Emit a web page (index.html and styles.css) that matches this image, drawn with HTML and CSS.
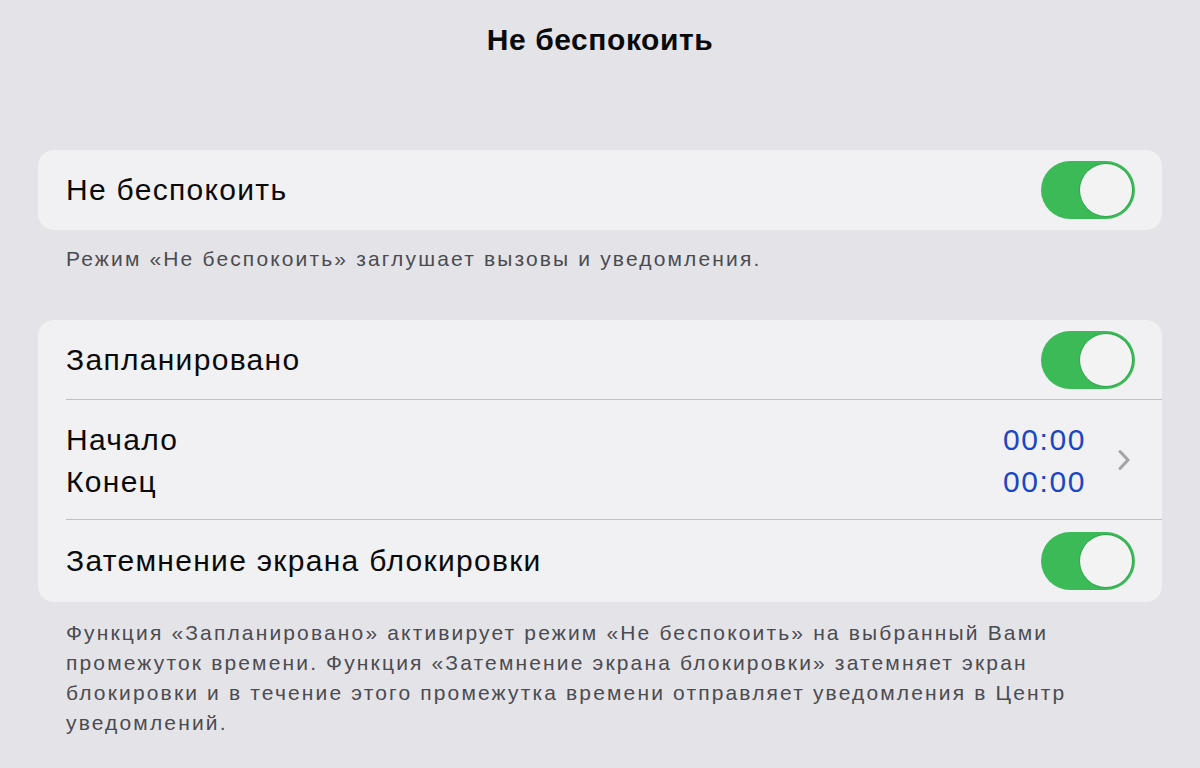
FILE: index.html
```html
<!DOCTYPE html>
<html lang="ru">
<head>
<meta charset="utf-8">
<link rel="stylesheet" href="styles.css">
</head>
<body>
<div class="page">
  <header class="nav"><h1 class="title">Не беспокоить</h1></header>

  <section class="group first">
    <div class="card">
      <div class="row">
        <span class="label">Не беспокоить</span>
        <span class="switch on"><span class="knob"></span></span>
      </div>
    </div>
    <p class="note">Режим «Не беспокоить» заглушает вызовы и уведомления.</p>
  </section>

  <section class="group second">
    <div class="card">
      <div class="row">
        <span class="label">Запланировано</span>
        <span class="switch on"><span class="knob"></span></span>
      </div>
      <div class="row tall">
        <div class="pair">
          <span class="label">Начало</span>
          <span class="label">Конец</span>
        </div>
        <div class="times">
          <span class="time">00:00</span>
          <span class="time">00:00</span>
        </div>
        <svg class="chev" width="14" height="22" viewBox="0 0 14 22"><path d="M3 2.5 L11 11 L3 19.5" fill="none" stroke="#a3a3a8" stroke-width="3" stroke-linecap="round" stroke-linejoin="round"/></svg>
      </div>
      <div class="row last">
        <span class="label">Затемнение экрана блокировки</span>
        <span class="switch on"><span class="knob"></span></span>
      </div>
    </div>
    <p class="note">Функция «Запланировано» активирует режим «Не беспокоить» на выбранный Вами промежуток времени. Функция «Затемнение экрана блокировки» затемняет экран блокировки и в течение этого промежутка времени отправляет уведомления в Центр уведомлений.</p>
  </section>
</div>
</body>
</html>
```

FILE: styles.css
```css
* { box-sizing: border-box; }
html, body {
  margin: 0;
  padding: 0;
  background: #e4e3e8;
  width: 1200px;
  height: 768px;
  overflow: hidden;
}
body {
  font-family: "Liberation Sans", Arial, sans-serif;
  color: #0a0a0a;
}
.page {
  display: flex;
  flex-direction: column;
  padding: 0 38px;
}
.nav {
  height: 80px;
  display: flex;
  align-items: center;
  justify-content: center;
}
.title {
  margin: 0;
  font-size: 30px;
  font-weight: 700;
  letter-spacing: 0.55px;
}
.group.first { margin-top: 70px; }
.group.second { margin-top: 46px; }
.card {
  background: #f1f1f3;
  border-radius: 16px;
  overflow: hidden;
}
.row {
  display: flex;
  align-items: center;
  height: 80px;
  padding: 0 27px 0 28px;
  position: relative;
}
.row + .row::before {
  content: "";
  position: absolute;
  left: 28px;
  right: 0;
  top: -1px;
  height: 1px;
  background: #c0c0c4;
}
.row.tall { height: 120px; }
.row.last { height: 82px; }
.label {
  font-size: 30px;
  line-height: 42px;
  letter-spacing: 1.3px;
  flex: 1;
}
.pair {
  display: flex;
  flex-direction: column;
  flex: 1;
  padding-top: 1px;
}
.times {
  display: flex;
  flex-direction: column;
  align-items: flex-end;
  padding-top: 1px;
}
.time {
  font-size: 30px;
  line-height: 42px;
  letter-spacing: 1.6px;
  color: #1c47c4;
}
.chev {
  margin-left: 31px;
  margin-right: 4px;
}
.switch {
  width: 94px;
  height: 58px;
  border-radius: 29px;
  background: #3cba58;
  display: flex;
  align-items: center;
  justify-content: flex-end;
  padding-right: 3px;
  flex: none;
}
.knob {
  width: 52px;
  height: 52px;
  border-radius: 50%;
  background: #f3f3f3;
  box-shadow: 0 0 0 1px #2fa84c;
}
.note {
  margin: 0;
  padding: 14px 28px 0;
  font-size: 21px;
  line-height: 30px;
  letter-spacing: 2.15px;
  color: #4b4b50;
}
.second .note { padding-top: 16px; }
```
